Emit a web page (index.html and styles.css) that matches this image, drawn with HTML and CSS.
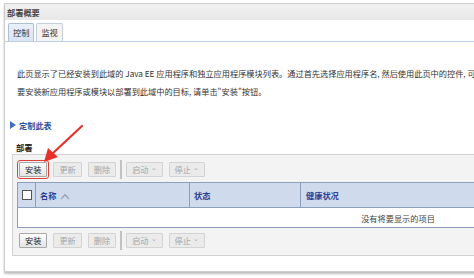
FILE: index.html
```html
<!DOCTYPE html>
<html lang="zh-CN">
<head>
    <meta charset="UTF-8">
    <title>部署概要</title>
    <link rel="stylesheet" href="styles.css">
</head>
<body>
    <div class="panel">
        <div class="panel-title">部署概要</div>
        <div class="tabs">
            <span class="tab active">控制</span>
            <span class="tab">监视</span>
        </div>
        <div class="content">
            <p class="intro">此页显示了已经安装到此域的 Java EE 应用程序和独立应用程序模块列表。通过首先选择应用程序名, 然后使用此页中的控件, 可</p>
            <p class="intro">要安装新应用程序或模块以部署到此域中的目标, 请单击"安装"按钮。</p>
            <a class="customize" href="#">
                <svg width="6" height="8" viewBox="0 0 6 8"><path d="M0 0 L6 4 L0 8 Z" fill="#3f6fc4"/></svg>
                定制此表
            </a>
            <div class="section-title">部署</div>
            <div class="table-box">
                <div class="toolbar">
                    <button class="btn primary marked">安装</button>
                    <button class="btn">更新</button>
                    <button class="btn">删除</button>
                    <span class="sep"></span>
                    <button class="btn">启动<span class="caret">&#8964;</span></button>
                    <button class="btn">停止<span class="caret">&#8964;</span></button>
                </div>
                <table class="grid">
                    <thead>
                        <tr>
                            <th class="check-col"><span class="checkbox"></span></th>
                            <th class="name-col">名称
                                <svg class="sort" width="10" height="7" viewBox="0 0 10 7"><path d="M1 6 L5 2 L9 6 M2.5 4 L5 1.5 L7.5 4" fill="none" stroke="#9aa7bd" stroke-width="1.2"/></svg>
                            </th>
                            <th class="state-col">状态</th>
                            <th class="health-col">健康状况</th>
                        </tr>
                    </thead>
                    <tbody>
                        <tr>
                            <td colspan="4" class="empty">没有将要显示的项目</td>
                        </tr>
                    </tbody>
                </table>
                <div class="toolbar">
                    <button class="btn primary">安装</button>
                    <button class="btn">更新</button>
                    <button class="btn">删除</button>
                    <span class="sep"></span>
                    <button class="btn">启动<span class="caret">&#8964;</span></button>
                    <button class="btn">停止<span class="caret">&#8964;</span></button>
                </div>
            </div>
        </div>
    </div>

    <!-- red annotation arrow pointing at the install button -->
    <svg class="arrow" width="60" height="50" viewBox="0 0 60 50">
        <path d="M44 2 L14 30" stroke="#e8302b" stroke-width="2.2" stroke-linecap="round"/>
        <path d="M6 38 L10 24 L20 33 Z" fill="#e8302b"/>
    </svg>
</body>
</html>
```

FILE: styles.css
```css
body {
    margin: 0;
    padding: 3px 0 0 4px;
    font-family: "Noto Sans CJK SC", "Liberation Sans", sans-serif;
    font-size: 8.2px;
    color: #333;
    background: #fff;
    overflow: hidden;
    position: relative;
    height: 275px;
}
.panel {
    width: 560px;
    border: 1px solid #cdcdcd;
    box-shadow: 0 2px 2px rgba(0, 0, 0, 0.25);
    background: #fff;
}
.panel-title {
    height: 16px;
    line-height: 16px;
    padding-left: 2px;
    font-weight: bold;
    color: #444;
    background: linear-gradient(to bottom, #f1f1f1, #e8e8e8);
}
.tabs {
    padding: 3px 0 0 3px;
    border-bottom: 1px solid #bcd0e6;
    display: flex;
    gap: 2px;
}
.tab {
    box-sizing: border-box;
    height: 18px;
    line-height: 16px;
    padding: 0 4px;
    border: 1px solid #c6cfd9;
    border-bottom: none;
    border-radius: 2px 2px 0 0;
    background: #f4f4f4;
    color: #333;
}
.tab.active {
    background: linear-gradient(to bottom, #e9f0f8, #d9e5f2);
    border-color: #aebfd6;
}
.content {
    padding: 22px 0 15px 5px;
}
.intro {
    margin: 0;
    padding-left: 7px;
    line-height: 18px;
    white-space: nowrap;
}
.customize {
    display: flex;
    align-items: center;
    gap: 3px;
    margin-top: 18px;
    line-height: 14px;
    font-weight: bold;
    color: #2d4f9e;
    text-decoration: none;
}
.section-title {
    margin-top: 8px;
    padding-left: 6px;
    line-height: 14px;
    font-weight: bold;
    color: #222;
}
.table-box {
    margin-left: 2px;
    border: 1px solid #d2d2d2;
    background: #f3f3f3;
    padding: 7px 0 7px 0;
}
.toolbar {
    display: flex;
    align-items: center;
    padding-left: 6px;
    gap: 6px;
    height: 15px;
}
.btn {
    box-sizing: border-box;
    height: 15px;
    padding: 0 5px;
    border: 1px solid #d3d3d3;
    border-radius: 1px;
    background: #ebebeb;
    color: #a6a6a6;
    font-family: inherit;
    font-size: 8.2px;
    line-height: 13px;
    display: flex;
    align-items: center;
}
.btn.primary {
    color: #222;
    border-color: #a8a8a8;
    background: linear-gradient(to bottom, #fdfdfd, #e4e4e4);
}
.btn.marked {
    outline: 1px solid #e0403a;
    outline-offset: 1px;
}
.caret {
    font-size: 7px;
    margin-left: 2px;
    color: #aaa;
    position: relative;
    top: -2px;
}
.sep {
    width: 2px;
    height: 19px;
    background: #c2c2c2;
    margin: 0 -2px;
}
.grid {
    margin: 5px 0 5px 4px;
    width: 762px;
    border-collapse: collapse;
    border: 1px solid #8d9fbd;
    background: #fff;
}
.grid th {
    height: 24px;
    background: #cfdbec;
    border-left: 1px solid #8d9fbd;
    text-align: left;
    padding: 0 0 0 4px;
    font-weight: bold;
    color: #2b3f98;
}
.grid .check-col {
    width: 13px;
    padding: 0 0 0 4px;
}
.grid .name-col {
    width: 149px;
}
.grid .state-col {
    width: 106px;
}
.grid .health-col {
    padding-left: 5px;
}
.checkbox {
    display: block;
    width: 8px;
    height: 8px;
    border: 1px solid #555;
    background: #fff;
}
.sort {
    vertical-align: middle;
    margin-left: 2px;
}
.grid td.empty {
    height: 17px;
    text-align: center;
    color: #444;
    border-top: 1px solid #8d9fbd;
}
.arrow {
    position: absolute;
    left: 38px;
    top: 124px;
}
```
